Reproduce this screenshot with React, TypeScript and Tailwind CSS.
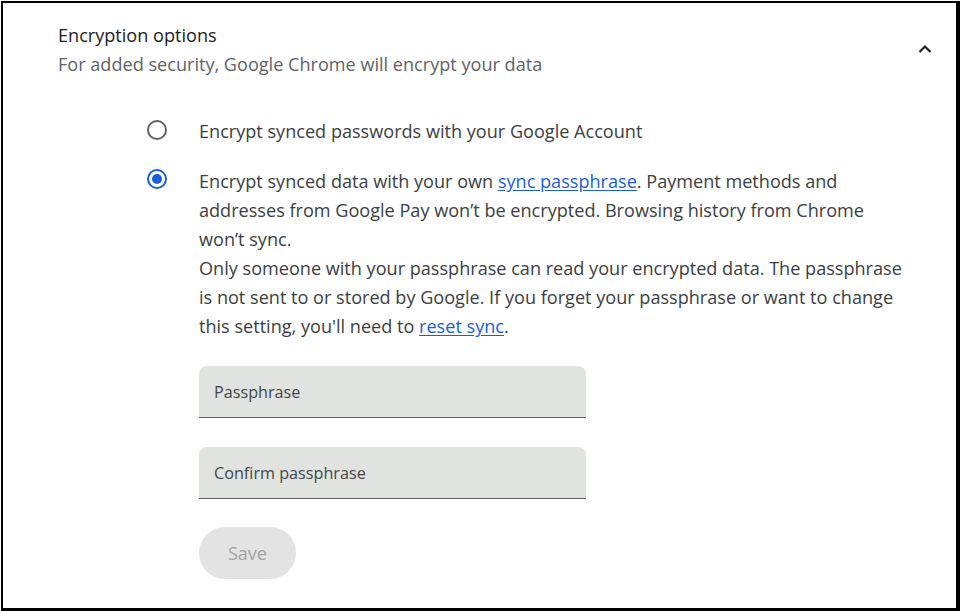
import React from "react";

export default function App() {
  return (
    <div className="w-[960px] h-[611px] bg-white pl-px pt-px" style={{ fontFamily: '"Open Sans", "Noto Sans", sans-serif' }}>
      <div className="w-[959px] h-[610px] border-l-2 border-t-2 border-r-4 border-b-[3px] border-black bg-white">
        <div className="flex items-start justify-between pl-[55px] pr-[22px] pt-[18px]">
          <div>
            <div className="text-[18.1px] leading-[29px] text-[#202124]">Encryption options</div>
            <div className="text-[18.1px] leading-[29px] text-[#5f6368]">For added security, Google Chrome will encrypt your data</div>
          </div>
          <svg width="18" height="18" viewBox="0 0 18 18" className="mt-[19px]">
            <path d="M3.5 12 L9 6.5 L14.5 12" fill="none" stroke="#202124" strokeWidth="2.2" />
          </svg>
        </div>

        <div className="pl-[144px] mt-[38px] flex flex-col gap-[21px]">
          <div className="flex items-start gap-[32px]">
            <div className="w-[20px] h-[20px] mt-[3px] rounded-full border-2 border-[#5f6368] shrink-0" />
            <div className="text-[18.1px] leading-[29px] text-[#3c4043]">Encrypt synced passwords with your Google Account</div>
          </div>
          <div className="flex items-start gap-[32px]">
            <div className="w-[20px] h-[20px] mt-[2px] rounded-full border-2 border-[#1a5ed8] shrink-0 flex items-center justify-center">
              <div className="w-[10px] h-[10px] rounded-full bg-[#1a5ed8]" />
            </div>
            <div>
              <div className="text-[18.1px] leading-[29px] text-[#3c4043] whitespace-nowrap">
                <div>
                  Encrypt synced data with your own{" "}
                  <span className="text-[#1a5ed8] underline underline-offset-2">sync passphrase</span>. Payment methods and
                </div>
                <div>addresses from Google Pay won’t be encrypted. Browsing history from Chrome</div>
                <div>won’t sync.</div>
                <div>Only someone with your passphrase can read your encrypted data. The passphrase</div>
                <div>is not sent to or stored by Google. If you forget your passphrase or want to change</div>
                <div>
                  this setting, you'll need to{" "}
                  <span className="text-[#1a5ed8] underline underline-offset-2">reset sync</span>.
                </div>
              </div>
              <div className="mt-[25px] flex flex-col gap-[29px]">
                <div className="w-[387px] h-[52px] rounded-t-[8px] bg-[#e1e3e1] border-b border-[#5f6368] flex items-center pl-[15px] pt-px text-[16.2px] text-[#444746]">
                  Passphrase
                </div>
                <div className="w-[387px] h-[52px] rounded-t-[8px] bg-[#e1e3e1] border-b border-[#5f6368] flex items-center pl-[15px] pt-px text-[16.2px] text-[#444746]">
                  Confirm passphrase
                </div>
              </div>
              <div className="mt-[28px] w-[97px] h-[52px] rounded-full bg-[#e3e3e3] flex items-center justify-center text-[18px] text-[#a2a2a2]">
                Save
              </div>
            </div>
          </div>
        </div>
      </div>
    </div>
  );
}
